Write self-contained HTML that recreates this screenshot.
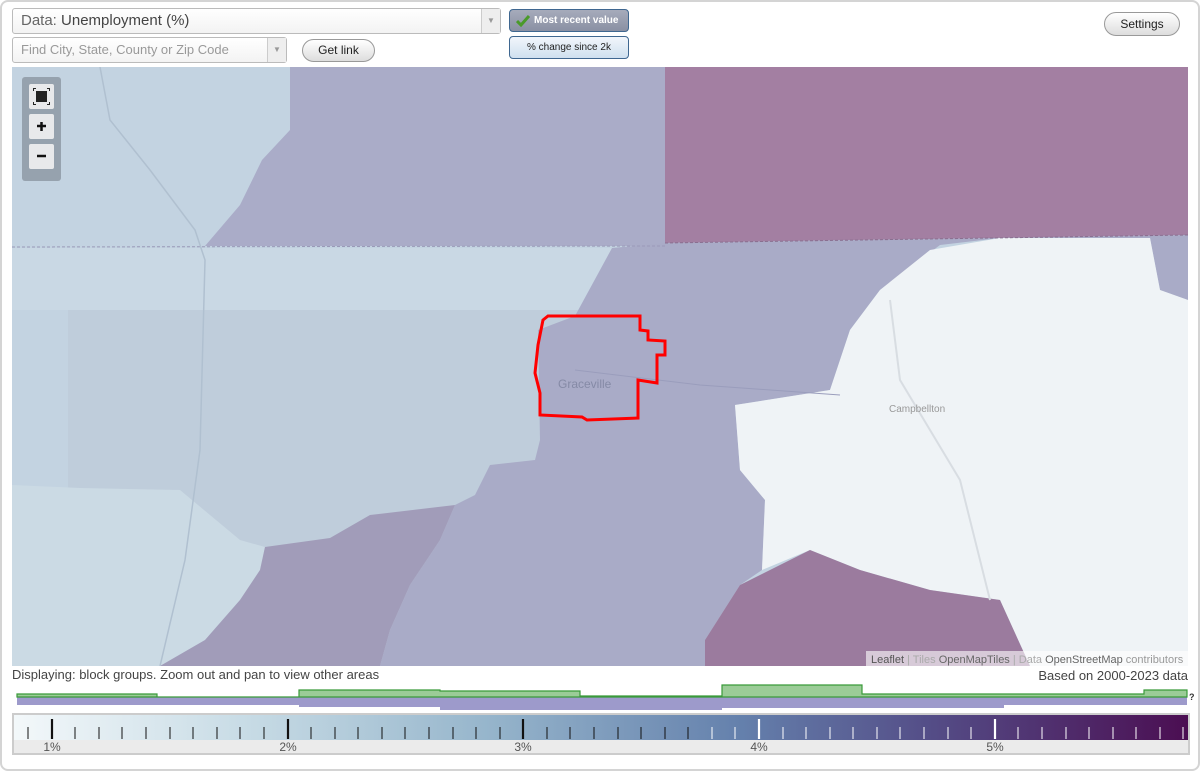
<!DOCTYPE html>
<html><head><meta charset="utf-8"><style>
*{box-sizing:border-box;margin:0;padding:0}
body{width:1200px;height:771px;background:#fff;font-family:"Liberation Sans",sans-serif;position:relative;overflow:hidden}
.frame{position:absolute;left:0;top:0;width:1200px;height:771px;border:2px solid #d4d4d4;border-radius:8px}
.sel{position:absolute;border:1px solid #bbb;border-radius:3px;background:linear-gradient(#fff,#f3f3f3);color:#444}
.sel .ar{position:absolute;right:0;top:0;bottom:0;width:19px;border-left:1px solid #ccc;background:#eee;color:#999;font-size:8px;text-align:center}
.btn{position:absolute;border:1px solid #999;border-radius:12px;background:linear-gradient(#fff,#ddd);font-size:12px;color:#222;text-align:center}
.abs{position:absolute}
</style></head><body>
<div class="frame"></div>
<div class="sel" style="left:12px;top:8px;width:489px;height:26px;font-size:15px;line-height:24px;padding-left:8px"><span style="color:#666">Data:</span> Unemployment (%)<div class="ar" style="line-height:24px">▼</div></div>
<div class="sel" style="left:12px;top:37px;width:275px;height:26px;font-size:13px;line-height:24px;padding-left:8px;color:#999">Find City, State, County or Zip Code<div class="ar" style="line-height:24px">▼</div></div>
<div class="btn" style="left:302px;top:39px;width:73px;height:23px;line-height:21px">Get link</div>
<div class="abs" style="left:509px;top:9px;width:120px;height:23px;border:1px solid #3f6790;border-radius:4px;background:linear-gradient(#a6abbb,#8a90a3);color:#fff;font-size:10px;font-weight:bold;line-height:21px;padding-left:24px">Most recent value
<svg class="abs" style="left:6px;top:4px" width="14" height="13" viewBox="0 0 14 13"><path d="M1 7 L5 11 L13 2" stroke="#4a9a2a" stroke-width="3" fill="none"/></svg></div>
<div class="abs" style="left:509px;top:36px;width:120px;height:23px;border:1px solid #3f6790;border-radius:4px;background:linear-gradient(#f2f6fb,#cfe0ef);color:#222;font-size:10px;line-height:21px;text-align:center">% change since 2k</div>
<div class="btn" style="left:1104px;top:12px;width:76px;height:24px;line-height:22px">Settings</div>

<svg class="abs" style="left:12px;top:67px" width="1176" height="599" viewBox="12 67 1176 599">
<rect x="12" y="67" width="1176" height="599" fill="#c3d3e1"/>
<rect x="12" y="248" width="660" height="62" fill="#c9d8e4"/>
<rect x="68" y="310" width="520" height="257" fill="#bfcddb"/>
<polygon points="12,485 80,488 180,490 240,540 265,547 260,570 240,600 205,640 160,666 12,666" fill="#cbdae4"/>
<polygon points="290,67 665,67 665,246 205,246 240,205 262,160 290,130" fill="#aaacc8"/>
<polygon points="665,67 1188,67 1188,235 665,243" fill="#a37fa2"/>
<polygon points="612,248 665,243 1188,235 1188,300 1160,290 1150,238 1000,238 940,245 880,290 850,330 830,390 735,405 740,470 765,500 762,570 740,585 705,640 705,666 380,666 390,630 410,585 440,540 455,505 475,495 490,465 535,460 540,440 538,330 575,316" fill="#a9abc7"/>
<polygon points="265,547 330,538 370,515 455,505 440,540 410,585 390,630 380,666 160,666 205,640 240,600 260,570" fill="#a19cb9"/>
<polygon points="930,250 1000,238 1150,238 1160,290 1188,300 1188,666 1030,666 1000,600 930,590 860,570 810,550 762,570 765,500 740,470 735,405 830,390 850,330 880,290" fill="#eff3f6"/>
<polygon points="705,640 740,585 810,550 860,570 930,590 1000,600 1030,666 705,666" fill="#9b7b9e"/>
<line x1="12" y1="247" x2="665" y2="246" stroke="#9a9ab8" stroke-dasharray="3,2"/>
<line x1="665" y1="243" x2="1188" y2="235" stroke="#8a6f90" stroke-dasharray="3,2"/>
<path d="M100 67 L110 120 L150 170 L195 230 L205 260 L200 450 L185 560 L160 666" stroke="#b0c0d0" fill="none" stroke-width="1.5"/>
<path d="M890 300 L900 380 L960 480 L990 600" stroke="#d8dde2" fill="none" stroke-width="2"/>
<path d="M575 370 L700 385 L840 395" stroke="#9a9dbc" fill="none"/>
<path d="M543,320 L548,316 L640,316 L640,330 L648,331 L648,340 L665,341 L665,355 L657,355 L657,383 L638,380 L638,418 L587,420 L582,417 L540,415 L540,393 L535,373 L538,345 Z" stroke="#ff0000" stroke-width="3" fill="none"/>
<text x="558" y="388" font-size="12" fill="#858aa6" font-family="Liberation Sans">Graceville</text>
<text x="889" y="412" font-size="10" fill="#999" font-family="Liberation Sans">Campbellton</text>
<rect x="22" y="77" width="39" height="104" rx="3" fill="#8e99a4" opacity="0.85"/>
<rect x="29" y="84" width="25" height="25" rx="2" fill="#e8e9eb"/>
<rect x="29" y="114" width="25" height="25" rx="2" fill="#e8e9eb"/>
<rect x="29" y="144" width="25" height="25" rx="2" fill="#e8e9eb"/>
<rect x="36" y="91" width="11" height="11" fill="#222"/>
<path d="M33 88h3v1h-2v2h-1zM50 88h-3v1h2v2h1zM33 105h3v-1h-2v-2h-1zM50 105h-3v-1h2v-2h1z" fill="#222"/>
<path d="M37 126h9M41.5 122v9" stroke="#111" stroke-width="2.5"/>
<path d="M37 156h9" stroke="#111" stroke-width="2.5"/>
<rect x="866" y="651" width="322" height="15" fill="#fff" opacity="0.6"/>
<text x="871" y="663" font-size="11" fill="#666" font-family="Liberation Sans"><tspan fill="#555">Leaflet</tspan><tspan fill="#aaa"> | Tiles </tspan><tspan fill="#666">OpenMapTiles</tspan><tspan fill="#aaa"> | Data </tspan><tspan fill="#666">OpenStreetMap</tspan><tspan fill="#999"> contributors</tspan></text>
</svg>

<div class="abs" style="left:12px;top:667px;font-size:13px;color:#444">Displaying: block groups. Zoom out and pan to view other areas</div>
<div class="abs" style="right:12px;top:668px;font-size:13px;color:#444">Based on 2000-2023 data</div>

<svg class="abs" style="left:0;top:680px" width="1200" height="32">
<g fill="#9d9acb">
<rect x="17" y="17" width="1170" height="8"/>
<rect x="299" y="17" width="141" height="10"/>
<rect x="440" y="17" width="282" height="13"/>
<rect x="722" y="17" width="282" height="11"/>
</g>
<path d="M17 17V14H157V17H299V10H440V11H580V16H722V5H862V14H1144V10H1187V17Z" fill="#9bcc97" stroke="#3a9a3a" stroke-width="1.2"/>
<text x="1189" y="20" font-size="9" font-weight="bold" fill="#333" font-family="Liberation Sans">?</text>
</svg>

<div class="abs" style="left:12px;top:713px;width:1178px;height:42px;border:2px solid #ccc;background:#ebebeb"></div>
<div class="abs" style="left:14px;top:715px;width:1174px;height:25px;background:linear-gradient(90deg,#f3f8fa 0%,#c7dbe5 20%,#97b6cc 40%,#6480ac 62%,#544d87 78%,#4b0e52 100%)"></div>
<svg class="abs" style="left:0;top:715px" width="1200" height="40">
<g font-family="Liberation Sans" font-size="12" fill="#555" text-anchor="middle">
<text x="52" y="36">1%</text><text x="288" y="36">2%</text><text x="523" y="36">3%</text><text x="759" y="36">4%</text><text x="995" y="36">5%</text>
</g>
<g stroke-width="1">
<path d="M28 12V24M75 12V24M99 12V24M122 12V24M146 12V24M170 12V24M193 12V24M217 12V24M240 12V24M264 12V24M311 12V24M335 12V24M358 12V24M382 12V24M405 12V24M429 12V24M453 12V24M476 12V24M500 12V24M547 12V24M570 12V24M594 12V24M618 12V24M641 12V24" stroke="#111"/>
<path d="M52 4V24M288 4V24M523 4V24" stroke="#111" stroke-width="2.2"/>
<path d="M665 12V24M688 12V24M712 12V24M735 12V24M783 12V24M806 12V24M830 12V24M853 12V24M877 12V24M900 12V24M924 12V24M948 12V24M971 12V24M1018 12V24M1042 12V24M1066 12V24M1089 12V24M1113 12V24M1136 12V24M1160 12V24M1183 12V24" stroke="#fff"/>
<path d="M759 4V24M995 4V24" stroke="#fff" stroke-width="2.2"/>
<path d="M665 12V24M688 12V24" stroke="#111"/>
</g>
</svg>
</body></html>
